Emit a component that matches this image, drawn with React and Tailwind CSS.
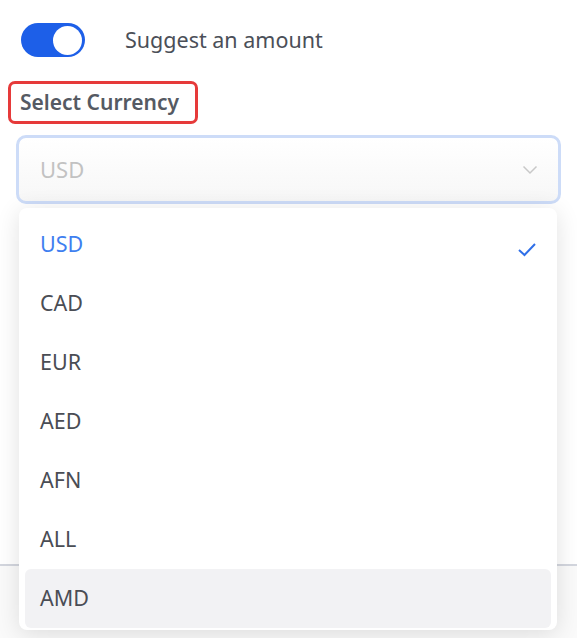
import React from "react";

const items = ["USD", "CAD", "EUR", "AED", "AFN", "ALL", "AMD"];

export default function App() {
  return (
    <div
      className="relative w-[577px] h-[638px] overflow-hidden bg-white"
      style={{ fontFamily: '"Noto Sans", "Open Sans", sans-serif' }}
    >
      <div className="flex items-center pl-[21px] pt-[23px]">
        <div className="relative w-[64px] h-[34px] rounded-full bg-[#1d5fe8]">
          <div className="absolute right-[3px] top-[2.5px] w-[29px] h-[29px] rounded-full bg-white" />
        </div>
        <span className="ml-[40px] text-[21.5px] leading-none text-[#4b4f58]">Suggest an amount</span>
      </div>

      <div className="mt-[24px] ml-[8px] inline-flex h-[43px] w-[190px] items-center rounded-[7px] border-[3px] border-[#e63a3a] pl-[9px]">
        <span className="text-[21px] font-semibold leading-none text-[#555a63]">Select Currency</span>
      </div>

      <div className="mx-[16px] mt-[11px] flex h-[69px] items-center justify-between rounded-[10px] border-[3px] border-[#cddcf8] bg-gradient-to-b from-white to-[#f7f7f7] pl-[21px] pr-[20px]">
        <span className="text-[22px] text-[#c2c2c2]">USD</span>
        <svg width="16" height="10" viewBox="0 0 16 10" fill="none">
          <path d="M1.5 1.5 L8 8 L14.5 1.5" stroke="#c8c8c8" strokeWidth="1.5" />
        </svg>
      </div>

      <div className="absolute left-0 right-0 top-[564px] h-[2px] bg-[#d3d6de]" />
      <div className="absolute left-0 right-0 top-[566px] bottom-0 bg-[#fafafa]" />

      <div className="absolute left-[19px] top-[208px] w-[538px] h-[422px] rounded-[8px] bg-white pt-[7px] shadow-[0_4px_24px_rgba(0,0,0,0.12)]">
        {items.map((c, i) => (
          <div
            key={c}
            className={
              "mx-[6px] flex h-[59px] items-center justify-between rounded-[6px] pl-[15px] pr-[14px] " +
              (i === items.length - 1 ? "bg-[#f2f2f4]" : "")
            }
          >
            <span className={"text-[21.5px] " + (i === 0 ? "text-[#3f7ff0]" : "text-[#4a4d54]")}>{c}</span>
            {i === 0 && (
              <svg width="20" height="16" viewBox="0 0 20 16" fill="none" className="mt-[8px]">
                <path d="M2 9 L7.5 14 L18 3" stroke="#2f6fe8" strokeWidth="2" />
              </svg>
            )}
          </div>
        ))}
      </div>
    </div>
  );
}
